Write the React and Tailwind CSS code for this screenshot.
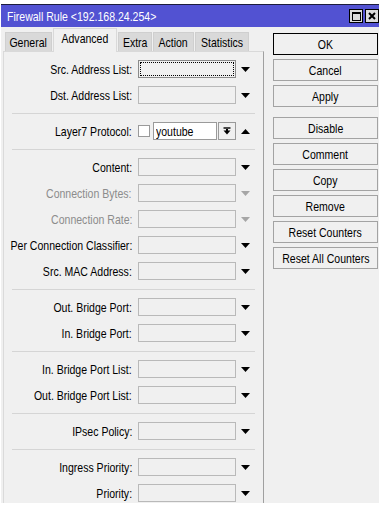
import React from "react";

const font = { fontFamily: '"Liberation Sans", Arial, sans-serif' };

// the screenshot uses a narrow face; squeeze Liberation Sans to match its widths
const T = ({ children, origin = "origin-center" }) => (
  <span className={`inline-block shrink-0 scale-x-[0.81] whitespace-nowrap ${origin}`}>{children}</span>
);

const Arrow = ({ up, disabled }) => (
  <svg width="9" height="5" viewBox="0 0 9 5" className="block">
    <path d={up ? "M0 5H9L4.5 0Z" : "M0 0H9L4.5 5Z"} fill={disabled ? "#a6a6a6" : "#000"} />
  </svg>
);

const Label = ({ children, disabled }) => (
  <div className={`flex w-[128px] justify-end ${disabled ? "text-[#8c8c8c]" : "text-black"}`}>
    <T origin="origin-right">{children}</T>
  </div>
);

const Row = ({ label, disabled, focused }) => (
  <div className="flex h-[26px] items-center">
    <Label disabled={disabled}>{label}:</Label>
    <div className={`ml-[6px] h-[18px] w-[98px] border bg-[#f0f0f0] p-px ${focused ? "border-[#8a8a8a]" : "border-[#b9b9b9]"}`}>
      {focused && <div className="h-full w-full border border-dotted border-black" />}
    </div>
    <div className="ml-[5px]">
      <Arrow disabled={disabled} />
    </div>
  </div>
);

const Sep = () => (
  <div className="flex h-[10px] items-center px-[8px]">
    <div className="h-px w-full bg-[#d5d5d5]" />
  </div>
);

const Tab = ({ label, active, w }) =>
  active ? (
    <div className={`relative z-10 -mb-px flex h-[24px] items-start justify-center border border-b-0 border-[#d9d9d9] bg-[#f0f0f0] pt-[3px] ${w}`}>
      <T>{label}</T>
    </div>
  ) : (
    <div className={`flex h-[19px] items-center justify-center border border-b-0 border-[#cfcfcf] bg-[#d9d9d9] pt-px ${w}`}>
      <T>{label}</T>
    </div>
  );

const buttons = [
  ["OK", "mt-0", true],
  ["Cancel", "mt-[4px]"],
  ["Apply", "mt-[4px]"],
  ["Disable", "mt-[10px]"],
  ["Comment", "mt-[4px]"],
  ["Copy", "mt-[4px]"],
  ["Remove", "mt-[4px]"],
  ["Reset Counters", "mt-[4px]"],
  ["Reset All Counters", "mt-[4px]"],
];

export default function App() {
  return (
    <div className="h-[513px] w-[383px] bg-white pt-[4px] text-[13px] leading-none text-black" style={font}>
      <div className="ml-px h-[499px] w-[378px] overflow-hidden border-t border-[#1c1c3c] bg-[#f0f0f0]">
        <div className="flex h-[22px] items-center justify-between bg-[#5252d2] pl-[6px] pr-0 text-white">
          <div className="flex pt-px">
            <T origin="origin-left">Firewall Rule &lt;192.168.24.254&gt;</T>
          </div>
          <div className="flex gap-[2px]">
            <div className="flex h-[14px] w-[14px] items-center justify-center border border-black bg-[#dcdcdc]">
              <div className="h-[9px] w-[9px] border border-t-2 border-black" />
            </div>
            <div className="flex h-[14px] w-[14px] items-center justify-center border border-black bg-[#dcdcdc]">
              <svg width="8" height="8" viewBox="0 0 8 8">
                <path d="M1 1L7 7M7 1L1 7" stroke="#000" strokeWidth="2" />
              </svg>
            </div>
          </div>
        </div>

        <div className="flex">
          <div className="ml-[2px] flex flex-col">
            <div className="flex h-[24px] items-end gap-px pl-[2px]">
              <Tab label="General" w="w-[47px]" />
              <Tab label="Advanced" w="w-[64px]" active />
              <Tab label="Extra" w="w-[34px]" />
              <Tab label="Action" w="w-[41px]" />
              <Tab label="Statistics" w="w-[54px]" />
            </div>
            <div className="h-[460px] w-[261px] border border-b-0 border-l-[#dadada] border-r-[#a0a0a0] border-t-[#d9d9d9] pt-[4px]">
              <Row label="Src. Address List" focused />
              <Row label="Dst. Address List" />
              <Sep />
              <div className="flex h-[26px] items-center">
                <Label>Layer7 Protocol:</Label>
                <div className="ml-[6px] h-[12px] w-[12px] border border-[#9a9a9a] bg-white" />
                <div className="ml-[3px] flex h-[18px] w-[64px] items-center overflow-hidden border border-[#9a9a9a] bg-white pl-[2px]">
                  <T origin="origin-left">youtube</T>
                </div>
                <div className="ml-px flex h-[18px] w-[18px] items-center justify-center border border-[#9a9a9a] bg-[#f0f0f0]">
                  <svg width="8" height="8" viewBox="0 0 8 8">
                    <path d="M0.5 1H7.5" stroke="#000" strokeWidth="1.4" />
                    <path d="M0.5 3.5H7.5L4 7.5Z" fill="#000" />
                    <path d="M4 2V4" stroke="#000" strokeWidth="2" />
                  </svg>
                </div>
                <div className="ml-[5px]">
                  <Arrow up />
                </div>
              </div>
              <Sep />
              <Row label="Content" />
              <Row label="Connection Bytes" disabled />
              <Row label="Connection Rate" disabled />
              <Row label="Per Connection Classifier" />
              <Row label="Src. MAC Address" />
              <Sep />
              <Row label="Out. Bridge Port" />
              <Row label="In. Bridge Port" />
              <Sep />
              <Row label="In. Bridge Port List" />
              <Row label="Out. Bridge Port List" />
              <Sep />
              <Row label="IPsec Policy" />
              <Sep />
              <Row label="Ingress Priority" />
              <Row label="Priority" />
            </div>
          </div>

          <div className="ml-[9px] mt-[6px] flex flex-col">
            {buttons.map(([label, mt, def]) => (
              <button
                key={label}
                className={`${mt} flex h-[22px] w-[105px] items-center justify-center bg-[#f0f0f0] ${def ? "border border-black" : "border border-[#a3a3a3]"}`}
              >
                <T>{label}</T>
              </button>
            ))}
          </div>
        </div>
      </div>
    </div>
  );
}
